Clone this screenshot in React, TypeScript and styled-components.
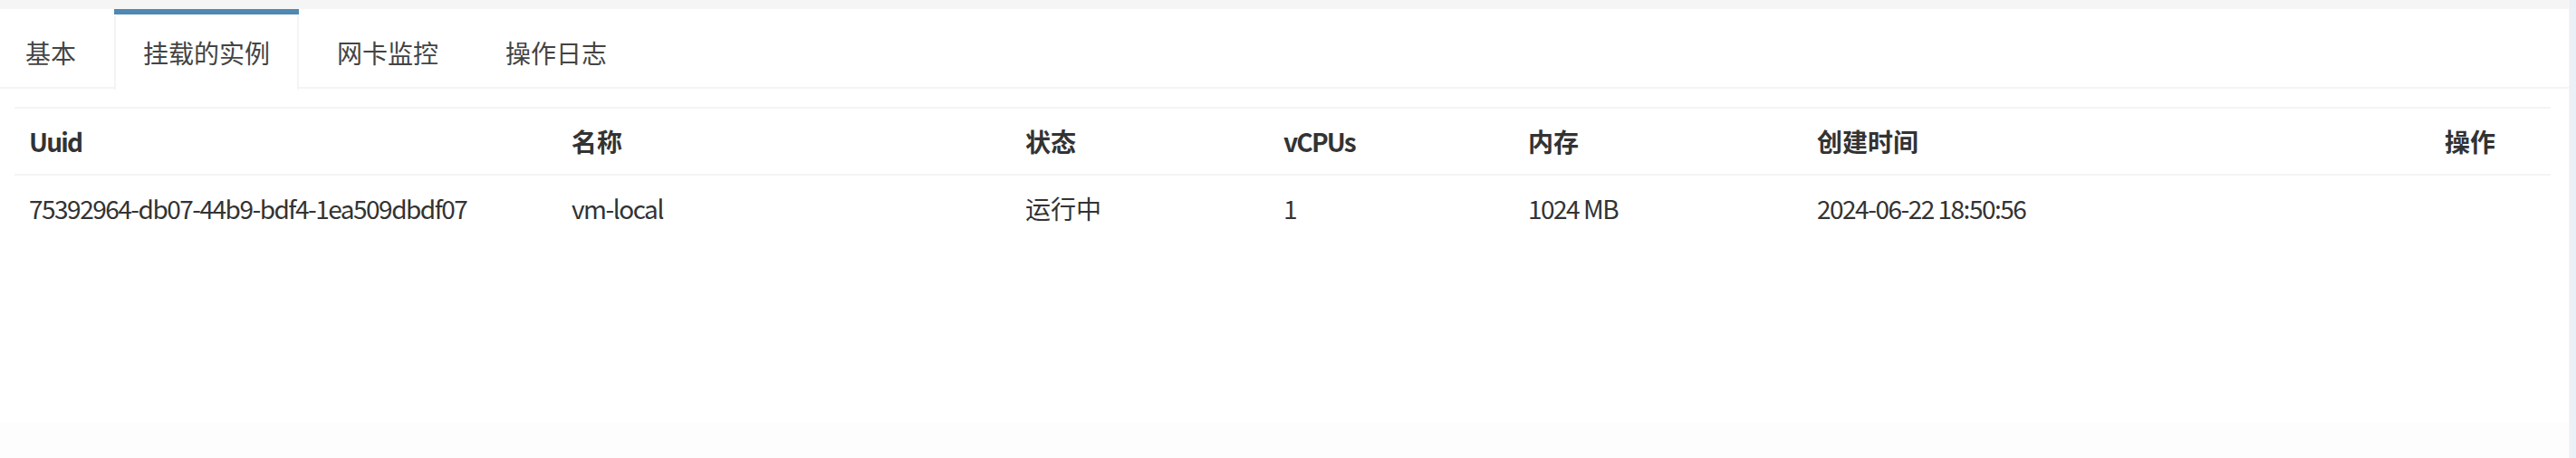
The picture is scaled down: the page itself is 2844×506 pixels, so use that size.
import React from "react";
import styled, { createGlobalStyle } from "styled-components";

const GlobalStyle = createGlobalStyle`
  html, body {
    margin: 0;
    padding: 0;
    width: 2844px;
    height: 506px;
    overflow: hidden;
    background: #fdfdfd;
  }
  body {
    font-family: "Noto Sans CJK SC", "Noto Sans", sans-serif;
    font-size: 28px;
    line-height: 40px;
    color: #333;
  }
`;

const Page = styled.div`
  display: flex;
  height: 506px;
`;

const Main = styled.div`
  flex: 1;
  display: flex;
  flex-direction: column;
  margin-left: -4px;
`;

const TopStrip = styled.div`
  height: 10px;
  background: #f5f5f5;
`;

const SideStrip = styled.div`
  width: 8px;
  background: #ebeff6;
  border-left: 1px solid #f2f4f8;
`;

const Panel = styled.div`
  height: 456px;
  background: #fff;
  display: flex;
  flex-direction: column;
  box-shadow: 0 2px 1px rgba(0, 0, 0, 0.12);
`;

const Filler = styled.div`
  flex: 1;
  background: #fdfdfd;
`;

const TabBar = styled.ul`
  display: flex;
  margin: 0;
  padding: 0;
  list-style: none;
  border-bottom: 2px solid #f4f4f4;
`;

const Tab = styled.li<{ $active?: boolean }>`
  margin: 0 10px -4px 0;
  border-top: 6px solid ${(p) => (p.$active ? "#4f88b3" : "transparent")};
  background: ${(p) => (p.$active ? "#fff" : "transparent")};
`;

const TabLink = styled.a<{ $active?: boolean }>`
  display: block;
  padding: 20px 30px;
  color: #444;
  text-decoration: none;
  border: 2px solid transparent;
  border-left-color: ${(p) => (p.$active ? "#f4f4f4" : "transparent")};
  border-right-color: ${(p) => (p.$active ? "#f4f4f4" : "transparent")};
  border-bottom-color: ${(p) => (p.$active ? "#fff" : "transparent")};
  white-space: nowrap;
  cursor: pointer;
`;

const TabContent = styled.div`
  flex: 1;
  padding: 20px;
`;

const Table = styled.table`
  width: 2800px;
  table-layout: fixed;
  border-collapse: collapse;
  border-spacing: 0;
`;

// Latin text in the reference is set tighter than Noto's Latin glyphs
const HeadCell = styled.th<{ $latin?: boolean }>`
  padding: 16px;
  text-align: left;
  font-weight: 700;
  color: #333;
  letter-spacing: ${(p) => (p.$latin ? "-1.8px" : "0")};
  border-top: 2px solid #f4f4f4;
  border-bottom: 2px solid #f4f4f4;
  white-space: nowrap;
`;

const Cell = styled.td<{ $latin?: boolean }>`
  padding: 16px;
  color: #333;
  letter-spacing: ${(p) => (p.$latin ? "-1.5px" : "0")};
  white-space: nowrap;
`;

const columns = [
  { title: "Uuid", width: 599 },
  { title: "名称", width: 501 },
  { title: "状态", width: 285 },
  { title: "vCPUs", width: 270 },
  { title: "内存", width: 319 },
  { title: "创建时间", width: 693 },
  { title: "操作", width: 133 },
];

const rows = [
  ["75392964-db07-44b9-bdf4-1ea509dbdf07", "vm-local", "运行中", "1", "1024 MB", "2024-06-22 18:50:56", ""],
];

const tabs = ["基本", "挂载的实例", "网卡监控", "操作日志"];

const isLatin = (s: string) => !/[\u4e00-\u9fff]/.test(s);

export default function App() {
  return (
    <>
      <GlobalStyle />
      <Page>
        <Main>
          <TopStrip />
          <Panel>
            <TabBar>
              {tabs.map((t, i) => (
                <Tab key={t} $active={i === 1}>
                  <TabLink $active={i === 1}>{t}</TabLink>
                </Tab>
              ))}
            </TabBar>
            <TabContent>
              <Table>
                <colgroup>
                  {columns.map((c) => (
                    <col key={c.title} width={c.width} />
                  ))}
                </colgroup>
                <thead>
                  <tr>
                    {columns.map((c) => (
                      <HeadCell key={c.title} $latin={isLatin(c.title)}>
                        {c.title}
                      </HeadCell>
                    ))}
                  </tr>
                </thead>
                <tbody>
                  {rows.map((r, i) => (
                    <tr key={i}>
                      {r.map((v, j) => (
                        <Cell key={j} $latin={isLatin(v)}>
                          {v}
                        </Cell>
                      ))}
                    </tr>
                  ))}
                </tbody>
              </Table>
            </TabContent>
          </Panel>
          <Filler />
        </Main>
        <SideStrip />
      </Page>
    </>
  );
}
